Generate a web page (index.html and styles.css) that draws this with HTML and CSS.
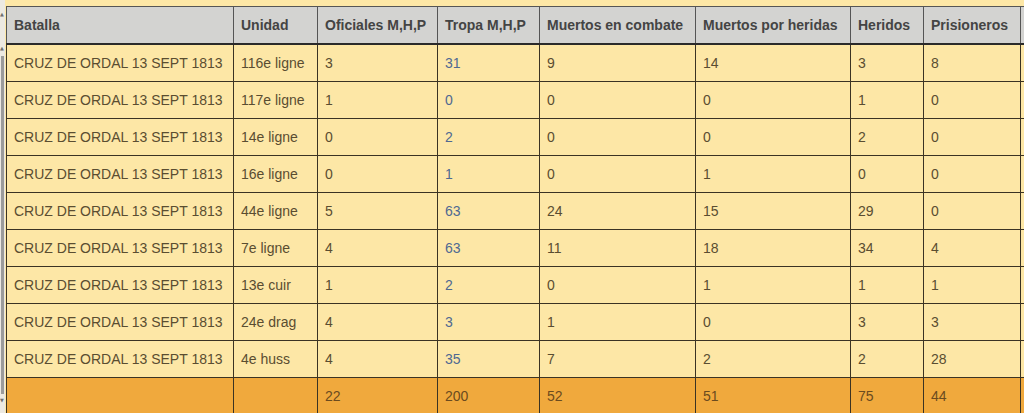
FILE: index.html
```html
<!DOCTYPE html>
<html lang="es">
<head>
<meta charset="utf-8">
<title>Bajas</title>
<link rel="stylesheet" href="styles.css">
</head>
<body>
<div class="page">
  <div class="scrollbar"><span class="arrow up">&#9650;</span><span class="arrow up2">&#9650;</span><span class="thumb"></span><span class="arrow down">&#9660;</span></div>
  <div class="wrap">
    <table class="bajas">
      <colgroup>
        <col class="c1"><col class="c2"><col class="c3"><col class="c4"><col class="c5"><col class="c6"><col class="c7"><col class="c8"><col class="c9">
      </colgroup>
      <thead>
        <tr><th>Batalla</th><th>Unidad</th><th>Oficiales M,H,P</th><th>Tropa M,H,P</th><th>Muertos en combate</th><th>Muertos por heridas</th><th>Heridos</th><th>Prisioneros</th><th></th></tr>
      </thead>
      <tbody>
        <tr><td>CRUZ DE ORDAL 13 SEPT 1813</td><td>116e ligne</td><td>3</td><td class="link">31</td><td>9</td><td>14</td><td>3</td><td>8</td><td></td></tr>
        <tr><td>CRUZ DE ORDAL 13 SEPT 1813</td><td>117e ligne</td><td>1</td><td class="link">0</td><td>0</td><td>0</td><td>1</td><td>0</td><td></td></tr>
        <tr><td>CRUZ DE ORDAL 13 SEPT 1813</td><td>14e ligne</td><td>0</td><td class="link">2</td><td>0</td><td>0</td><td>2</td><td>0</td><td></td></tr>
        <tr><td>CRUZ DE ORDAL 13 SEPT 1813</td><td>16e ligne</td><td>0</td><td class="link">1</td><td>0</td><td>1</td><td>0</td><td>0</td><td></td></tr>
        <tr><td>CRUZ DE ORDAL 13 SEPT 1813</td><td>44e ligne</td><td>5</td><td class="link">63</td><td>24</td><td>15</td><td>29</td><td>0</td><td></td></tr>
        <tr><td>CRUZ DE ORDAL 13 SEPT 1813</td><td>7e ligne</td><td>4</td><td class="link">63</td><td>11</td><td>18</td><td>34</td><td>4</td><td></td></tr>
        <tr><td>CRUZ DE ORDAL 13 SEPT 1813</td><td>13e cuir</td><td>1</td><td class="link">2</td><td>0</td><td>1</td><td>1</td><td>1</td><td></td></tr>
        <tr><td>CRUZ DE ORDAL 13 SEPT 1813</td><td>24e drag</td><td>4</td><td class="link">3</td><td>1</td><td>0</td><td>3</td><td>3</td><td></td></tr>
        <tr><td>CRUZ DE ORDAL 13 SEPT 1813</td><td>4e huss</td><td>4</td><td class="link">35</td><td>7</td><td>2</td><td>2</td><td>28</td><td></td></tr>
      </tbody>
      <tfoot>
        <tr><td></td><td></td><td>22</td><td>200</td><td>52</td><td>51</td><td>75</td><td>44</td><td></td></tr>
      </tfoot>
    </table>
  </div>
</div>
</body>
</html>
```

FILE: styles.css
```css
html, body {
  margin: 0;
  padding: 0;
  background: #fde7a6;
  overflow: hidden;
}

.page {
  display: flex;
  width: 1024px;
  height: 413px;
  overflow: hidden;
}

.scrollbar {
  position: relative;
  flex: 0 0 5px;
  background: #ece9e2;
}

.scrollbar .arrow {
  position: absolute;
  left: 0;
  font-size: 5px;
  line-height: 5px;
  color: #6e6e6e;
  font-family: "DejaVu Sans", sans-serif;
}

.scrollbar .up { top: 12px; }
.scrollbar .up2 { top: 46px; }
.scrollbar .down { top: 398px; }

.scrollbar .thumb {
  position: absolute;
  left: 1px;
  width: 3px;
  top: 56px;
  height: 338px;
  background: #9b9b9b;
}

.wrap {
  flex: 0 0 auto;
  padding-top: 6px;
  padding-left: 1px;
}

.bajas {
  border-collapse: collapse;
  table-layout: fixed;
  width: 1114px;
  font-family: "Liberation Sans", Arial, sans-serif;
  font-size: 14px;
  color: #5a4d31;
}

.c1 { width: 227px; }
.c2 { width: 84px; }
.c3 { width: 120px; }
.c4 { width: 102px; }
.c5 { width: 156px; }
.c6 { width: 155px; }
.c7 { width: 73px; }
.c8 { width: 97px; }
.c9 { width: 100px; }

.bajas th,
.bajas td {
  border: 1px solid #3b3323;
  padding: 0 8px 0 7px;
  text-align: left;
  white-space: nowrap;
  overflow: hidden;
}

.bajas th {
  height: 36px;
  background: #d3d3d1;
  color: #444444;
  font-weight: bold;
  border-color: #555555;
  border-bottom: 2px solid #2a2a2a;
}

.bajas tbody td {
  height: 36px;
  background: #fde7a6;
}

.bajas td.link {
  color: #4f6992;
}

.bajas tfoot td {
  height: 36px;
  background: #f0a93d;
  color: #6b4b1f;
}
```
